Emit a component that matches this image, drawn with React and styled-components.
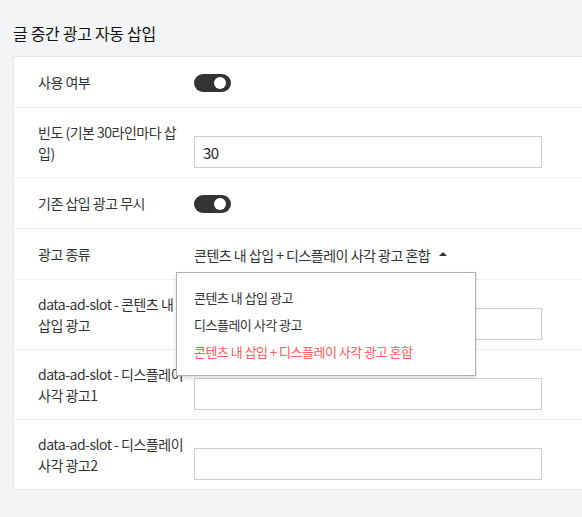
import styled, { createGlobalStyle } from "styled-components";

const GlobalStyle = createGlobalStyle`
  html, body {
    margin: 0;
    padding: 0;
    background: #f3f4f6;
  }
  body {
    font-family: "Noto Sans CJK KR", "Noto Sans", sans-serif;
    color: #333;
    letter-spacing: -0.5px;
    overflow: hidden;
  }
`;

const Page = styled.div`
  padding: 21px 0 0 13px;
  width: 600px;
`;

const Title = styled.h2`
  margin: 0 0 11px;
  font-size: 16px;
  font-weight: 400;
  line-height: 24px;
  letter-spacing: -0.3px;
  color: #111;
`;

const Card = styled.div`
  background: #fff;
  border: 1px solid #e1e4ea;
  border-right: none;
`;

const Row = styled.div`
  display: flex;
  align-items: center;
  padding: 10px 24px 9px;
  min-height: 31px;
  border-top: ${(p) => (p.$first ? "none" : "1px solid #eef0f3")};
`;

const Label = styled.div`
  width: 148px;
  flex: none;
  margin-right: 8px;
  font-size: 14px;
  line-height: 21px;
  color: #333;
  word-break: break-all;
`;

const Value = styled.div`
  position: relative;
  display: flex;
  align-items: center;
`;

const Field = styled.div`
  padding-top: 18px;
`;

const Toggle = styled.div`
  position: relative;
  width: 37px;
  height: 18px;
  border-radius: 9px;
  background: ${(p) => (p.$on ? "#333" : "#ccc")};

  &::after {
    content: "";
    position: absolute;
    top: 3px;
    left: ${(p) => (p.$on ? "20px" : "3px")};
    width: 12px;
    height: 12px;
    border-radius: 50%;
    background: #fff;
  }
`;

const Input = styled.input`
  display: block;
  box-sizing: border-box;
  width: 348px;
  height: 32px;
  border: 1px solid #c9cfd8;
  padding: 0 8px;
  font-family: inherit;
  font-size: 15px;
  letter-spacing: -0.5px;
  color: #222;
  outline: none;
  background: #fff;
`;

const Select = styled.div`
  display: flex;
  align-items: center;
  gap: 9px;
  height: 20px;
  font-size: 14px;
  line-height: 20px;
  color: #333;
  cursor: pointer;
`;

const Caret = styled.span`
  width: 0;
  height: 0;
  border-left: 4px solid transparent;
  border-right: 4px solid transparent;
  border-bottom: 4px solid #333;
  margin-bottom: 2px;
`;

const Menu = styled.ul`
  position: absolute;
  top: 27px;
  left: -18px;
  z-index: 2;
  box-sizing: border-box;
  width: 300px;
  margin: 0;
  padding: 11px 0 10px;
  list-style: none;
  background: #fff;
  border: 1px solid #a9b0bb;
  box-shadow: 0 2px 4px rgba(0, 0, 0, 0.15);
`;

const MenuItem = styled.li`
  padding: 0 17px;
  font-size: 13px;
  line-height: 27px;
  color: ${(p) => (p.$active ? "#ff5a5a" : "#333")};
  cursor: pointer;
`;

const options = [
  "콘텐츠 내 삽입 광고",
  "디스플레이 사각 광고",
  "콘텐츠 내 삽입 + 디스플레이 사각 광고 혼합",
];

const slots = [
  "data-ad-slot - 콘텐츠 내 삽입 광고",
  "data-ad-slot - 디스플레이 사각 광고1",
  "data-ad-slot - 디스플레이 사각 광고2",
];

export default function App() {
  const selected = options[2];

  return (
    <>
      <GlobalStyle />
      <Page>
        <Title>글 중간 광고 자동 삽입</Title>
        <Card>
          <Row $first>
            <Label>사용 여부</Label>
            <Value>
              <Toggle $on />
            </Value>
          </Row>
          <Row>
            <Label>빈도 (기본 30라인마다 삽입)</Label>
            <Field>
              <Input defaultValue="30" />
            </Field>
          </Row>
          <Row>
            <Label>기존 삽입 광고 무시</Label>
            <Value>
              <Toggle $on />
            </Value>
          </Row>
          <Row>
            <Label>광고 종류</Label>
            <Value>
              <Select>
                {selected}
                <Caret />
              </Select>
              <Menu>
                {options.map((o) => (
                  <MenuItem key={o} $active={o === selected}>
                    {o}
                  </MenuItem>
                ))}
              </Menu>
            </Value>
          </Row>
          {slots.map((s) => (
            <Row key={s}>
              <Label>{s}</Label>
              <Field>
                <Input />
              </Field>
            </Row>
          ))}
        </Card>
      </Page>
    </>
  );
}
